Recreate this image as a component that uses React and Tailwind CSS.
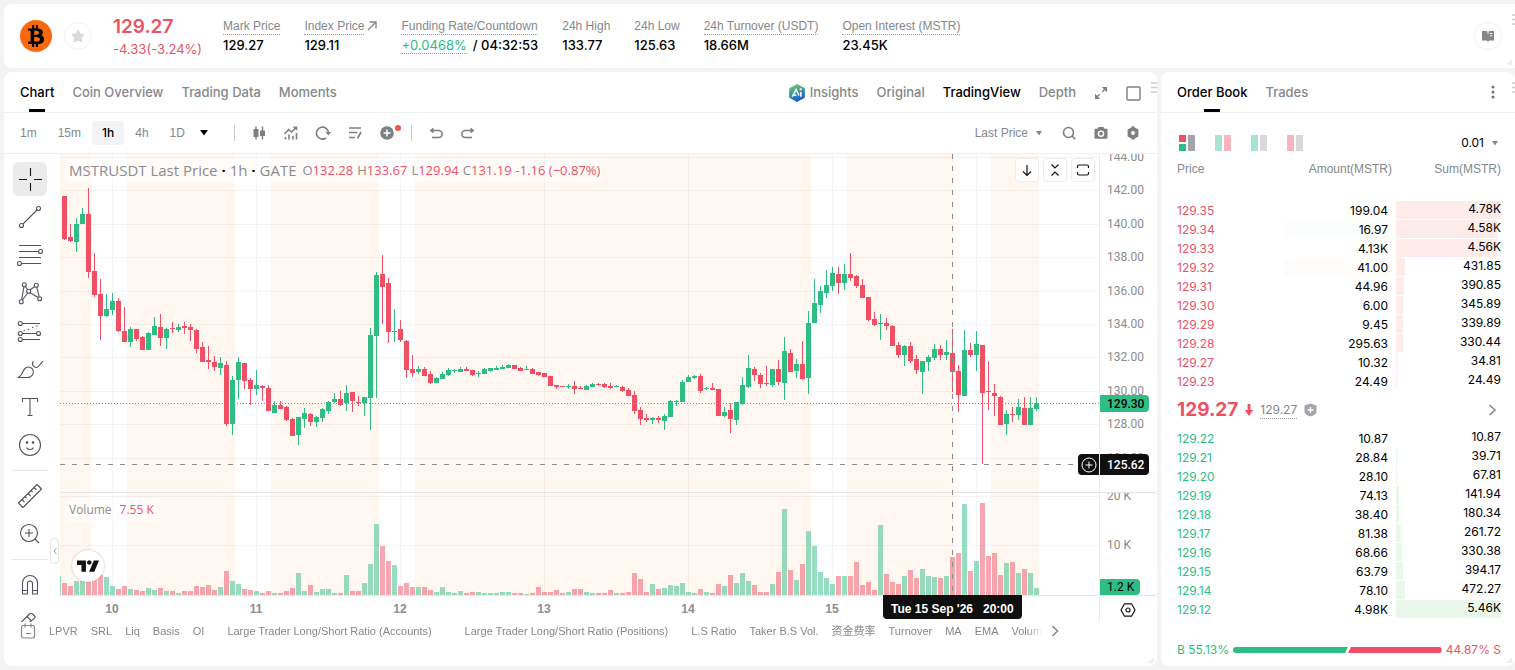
import React from "react";
import { FaBtc, FaStar } from "react-icons/fa";
import { SiTradingview } from "react-icons/si";

const UP = "#2ebd85";
const DOWN = "#f04f64";
const STEP = 6;

// Each candle: direction, body top, body bottom, high, low, volume height
const CANDLES = [
  ["d",196,239,196,240,12],["d",237,241,224,242,9],["u",224,242,218,252,14],["u",214,224,208,224,14],["d",214,272,188,278,18],
  ["d",271,295,253,297,18],["d",294,316,279,340,20],["u",309,316,294,317,18],["u",301,310,293,315,9],["d",301,331,298,332,6],
  ["d",331,342,307,342,9],["u",329,342,327,347,6],["d",329,339,329,341,5],["d",337,350,336,350,4],["u",333,350,332,350,7],
  ["u",326,335,317,335,5],["d",327,338,314,346,7],["u",329,338,328,349,4],["d",328,329,322,333,4],["u",327,330,324,332,2],
  ["d",326,328,322,334,4],["d",327,330,324,341,4],["d",330,349,329,353,9],["d",347,362,342,362,8],["d",360,362,346,369,10],
  ["d",362,367,356,371,5],["u",363,368,357,375,8],["d",365,424,361,426,24],["u",380,424,376,435,14],["u",362,380,357,399,11],
  ["d",363,381,363,389,6],["d",380,389,378,405,5],["u",385,389,370,395,4],["d",386,388,385,401,2],["d",388,411,385,411,4],
  ["u",405,413,401,413,2],["d",405,409,401,409,2],["d",407,420,406,421,4],["d",419,436,418,436,7],["u",417,435,417,445,22],
  ["u",413,419,408,428,4],["d",414,422,413,426,10],["u",417,422,416,427,3],["u",409,418,408,422,6],["u",402,411,401,414,6],
  ["u",399,402,393,403,2],["d",399,405,391,406,2],["u",393,403,385,411,20],["d",392,401,392,412,4],["d",402,403,396,406,4],
  ["u",397,403,397,416,12],["u",335,398,328,430,31],["u",275,336,272,398,71],["d",274,287,255,324,49],["d",283,332,278,343,34],
  ["u",331,332,309,342,30],["d",329,340,320,342,9],["d",341,370,340,378,12],["d",369,373,355,377,8],["u",369,372,366,374,8],
  ["d",369,376,367,376,8],["d",374,383,371,384,5],["u",378,383,377,383,3],["u",374,379,372,379,8],["u",370,375,368,376,3],
  ["u",370,371,369,373,2],["u",369,372,367,372,4],["d",369,371,367,371,2],["d",370,375,370,376,3],["u",373,374,371,377,3],
  ["u",369,374,368,374,2],["u",368,371,368,372,2],["u",368,370,366,370,2],["u",367,369,365,369,3],["u",365,368,364,368,3],
  ["d",365,369,365,369,2],["d",368,371,367,371,2],["u",369,370,366,370,1],["d",369,374,368,374,2],["d",372,375,372,376,8],
  ["d",373,377,373,377,3],["d",376,386,376,386,3],["d",385,387,385,389,5],["d",386,387,386,387,2],["u",386,387,384,389,3],
  ["d",386,389,381,394,6],["d",388,389,386,389,6],["u",386,390,385,390,3],["u",384,387,383,387,2],["d",384,385,383,386,2],
  ["d",384,387,383,388,2],["d",386,388,383,389,5],["u",386,387,385,387,2],["d",387,391,386,392,2],["d",390,396,388,396,3],
  ["d",395,411,391,414,22],["d",410,419,407,425,16],["d",418,420,414,422,3],["u",418,420,417,424,11],["d",418,420,416,423,6],
  ["u",416,421,414,430,7],["u",401,417,400,417,10],["u",401,402,400,406,9],["u",382,402,380,402,12],["u",377,382,375,382,3],
  ["u",376,378,375,379,2],["d",376,391,374,393,6],["u",388,389,387,390,3],["d",388,390,383,390,2],["d",389,416,389,416,11],
  ["u",412,416,407,417,9],["d",410,419,403,433,20],["u",402,420,402,425,12],["u",385,404,377,405,22],["u",368,387,355,388,14],
  ["d",369,375,367,381,10],["d",375,384,373,388,3],["d",383,384,366,386,3],["u",369,385,369,387,11],["d",369,382,360,385,23],
  ["u",351,383,337,400,86],["d",353,372,349,372,25],["u",364,371,359,378,15],["d",364,379,341,380,31],["u",323,378,311,394,64],
  ["u",303,323,279,323,49],["u",291,305,286,313,23],["u",285,293,270,298,17],["u",273,286,267,291,11],["d",274,283,267,294,19],
  ["u",274,283,264,290,19],["d",274,278,253,281,19],["d",276,286,275,288,33],["d",285,298,279,298,10],["d",297,320,297,321,13],
  ["d",319,325,312,326,5],["u",323,324,314,340,70],["d",323,326,318,330,21],["d",326,346,325,346,13],["d",345,355,342,358,11],
  ["u",346,355,345,366,19],["d",346,361,342,363,25],["d",359,370,355,374,17],["u",361,372,361,394,26],["u",357,362,355,371,19],
  ["u",349,358,344,360,18],["d",349,355,345,360,17],["u",352,355,340,360,19],["d",353,372,329,392,38],["d",371,395,365,412,42],
  ["u",350,396,330,396,91],["d",350,355,343,357,24],["u",344,355,331,371,34],["d",345,393,345,464,92],["d",391,392,361,410,39],
  ["d",393,396,384,416,42],["d",397,425,396,425,20],["u",414,424,410,435,32],["d",414,415,407,422,33],["u",407,415,399,420,22],
  ["d",408,425,397,425,26],["u",408,425,397,425,22],["u",403,409,397,411,7],
];

const SESSIONS = [[60,31],[127,108],[271,108],[415,396],[847,107],[991,48]];
const PRICE_LINES = [157,190,224,257,291,324,357,391,424,458];
const PRICES = ["144.00","142.00","140.00","138.00","136.00","134.00","132.00","130.00","128.00","126.00"];
const DAYS = ["10","11","12","13","14","15"];

const ASKS = [
  ["129.35","199.04","4.78K",105],["129.34","16.97","4.58K",101],["129.33","4.13K","4.56K",101],["129.32","41.00","431.85",9],
  ["129.31","44.96","390.85",8],["129.30","6.00","345.89",7],["129.29","9.45","339.89",7],["129.28","295.63","330.44",7],
  ["129.27","10.32","34.81",1],["129.23","24.49","24.49",1],
];
const BIDS = [
  ["129.22","10.87","10.87",0],["129.21","28.84","39.71",1],["129.20","28.10","67.81",1],["129.19","74.13","141.94",3],
  ["129.18","38.40","180.34",3],["129.17","81.38","261.72",5],["129.16","68.66","330.38",6],["129.15","63.79","394.17",7],
  ["129.14","78.10","472.27",9],["129.12","4.98K","5.46K",105],
];

function Stat({ label, value, dotted, arrow }) {
  return (
    <div className="flex flex-col items-start gap-[2px]">
      <div className="flex items-center gap-[3px] font-['Liberation_Sans',sans-serif] text-xs leading-4 text-[#84888c]">
        <span className={dotted ? "border-b border-dotted border-[#9a9da0]" : "border-b border-transparent"}>{label}</span>
        {arrow && (
          <svg width="10" height="10" viewBox="0 0 10 10" fill="none" stroke="currentColor" strokeWidth="1.3">
            <path d="M1 9 8.7 1.3M2.6 1h6.4v6.4" />
          </svg>
        )}
      </div>
      <div className="text-[13px] leading-4 font-medium text-black">{value}</div>
    </div>
  );
}

function Grip({ className, width }) {
  return (
    <svg className={className} width={width} height="12" aria-hidden="true">
      <path d={`M0 1h${width}M0 5.500h${width}M0 10h${width}`} stroke="#c9ccd0" strokeWidth="1.400" />
    </svg>
  );
}

function Corner() {
  return (
    <svg className="absolute right-[3px] bottom-[3px]" width="6" height="6" aria-hidden="true">
      <path d="M6 0v6H0z" fill="#eceef0" />
    </svg>
  );
}

function Header() {
  return (
    <header className="relative flex h-16 items-center overflow-hidden rounded-l-lg bg-white pl-4">
      <span className="flex size-8 items-center justify-center rounded-full bg-[#fa690f] text-black">
        <FaBtc size={22} />
      </span>
      <button aria-label="Favourite" className="ml-3 flex size-7 items-center justify-center rounded-full border border-[#f0f1f2] text-[#d9dadc]">
        <FaStar size={14} />
      </button>
      <div className="ml-[21px] flex flex-col pt-[2px] text-[#ec5266]">
        <span className="text-[19px] leading-6 font-semibold">129.27</span>
        <span className="text-[13px] leading-5">-4.33(-3.24%)</span>
      </div>
      <div className="ml-[21px] flex gap-6 pb-[2px]">
        <Stat label="Mark Price" value="129.27" dotted />
        <Stat label="Index Price" value="129.11" dotted arrow />
        <Stat
          label="Funding Rate/Countdown"
          dotted
          value={
            <>
              <span className="border-b border-dotted border-[#9a9da0] font-normal text-[#2ebd85]">+0.0468%</span>
              <span className="ml-[6px]">/ 04:32:53</span>
            </>
          }
        />
        <Stat label="24h High" value="133.77" />
        <Stat label="24h Low" value="125.63" />
        <Stat label="24h Turnover (USDT)" value="18.66M" dotted />
        <Stat label="Open Interest (MSTR)" value="23.45K" dotted />
      </div>
      <button aria-label="Guide" className="mr-[13px] ml-auto flex size-7 items-center justify-center rounded-full border border-[#f0f1f2]">
        <svg width="14" height="14" viewBox="0 0 14 14">
          <path d="M1 2h4.500L7 3l1.500-1H13v9.500H8.200L7 13l-1.200-1.500H1z" fill="#84868a" />
          <path d="M7 3v2M8.800 4.500h2.600M8.800 6.800h2.600" stroke="#fff" strokeWidth="0.900" />
        </svg>
      </button>
      <Grip className="absolute top-[10px] right-0" width={3} />
      <Corner />
    </header>
  );
}

function ChartTabs() {
  return (
    <div className="relative flex h-[41px] items-center border-b border-[#eff0f1] px-4 text-[13px] font-medium text-[#84888c]">
      <nav className="flex h-full gap-[18px] pt-[2px]">
        <button className="relative text-black">
          Chart
          <span className="absolute bottom-0 left-1/2 h-[3px] w-4 -translate-x-1/2 bg-black" />
        </button>
        <button>Coin Overview</button>
        <button>Trading Data</button>
        <button>Moments</button>
      </nav>
      <div className="ml-auto flex items-center gap-[18px] pt-[2px]">
        <button className="flex items-center gap-1">
          <svg width="18" height="20" viewBox="0 0 18 20">
            <defs>
              <linearGradient id="ai" x1="0" y1="0" x2="0.400" y2="1">
                <stop offset="0" stopColor="#7ed957" />
                <stop offset="0.500" stopColor="#3a9c9c" />
                <stop offset="1" stopColor="#1d5fd0" />
              </linearGradient>
            </defs>
            <path d="M9 1.500 16.300 5.500v9L9 18.500 1.700 14.500v-9z" fill="url(#ai)" stroke="url(#ai)" strokeLinejoin="round" />
            <path d="M4.200 13.700 8.200 6.500 11 12.500M6 12.300h2.400M12.800 9v4.700" fill="none" stroke="#fff" strokeWidth="1.600" />
            <path d="M12.800 4.800v2.800M11.400 6.200h2.800" stroke="#fff" strokeWidth="0.900" />
          </svg>
          Insights
        </button>
        <button>Original</button>
        <button className="text-black">TradingView</button>
        <button>Depth</button>
        <button aria-label="Expand">
          <svg width="14" height="14" viewBox="0 0 14 14" fill="none" stroke="#7d8083" strokeWidth="1.500">
            <path d="M8.300 5.700 12 2M5.700 8.300 2 12" />
            <path d="M7.800 1H13v5.200zM1 7.800V13h5.200z" fill="#7d8083" stroke="none" />
          </svg>
        </button>
        <button aria-label="Full screen">
          <svg width="15" height="15" viewBox="0 0 15 15" fill="none" stroke="#7d8083" strokeWidth="1.400">
            <rect x="1" y="1" width="13" height="13" rx="1" />
          </svg>
        </button>
      </div>
      <Grip className="absolute top-[10px] right-0" width={6} />
    </div>
  );
}

function ToolButton({ label, children }) {
  return (
    <button aria-label={label} className="relative flex h-6 w-8 items-center justify-center text-[#7d8083]">
      {children}
    </button>
  );
}

function Icon16({ children }) {
  return (
    <svg width="16" height="16" viewBox="0 0 16 16" fill="none" stroke="currentColor" strokeWidth="1.600">
      {children}
    </svg>
  );
}

function ChartToolbar() {
  return (
    <div className="flex h-[41px] items-center border-b border-[#eff0f1] pr-2 pl-[6px] font-['Liberation_Sans',sans-serif] text-xs text-[#84888c]">
      <div className="flex items-center gap-px">
        <button className="h-6 px-[10px]">1m</button>
        <button className="h-6 px-[10px]">15m</button>
        <button className="h-6 rounded bg-[#f2f3f4] px-[10px] font-['Inter',sans-serif] font-medium text-black">1h</button>
        <button className="h-6 px-[10px]">4h</button>
        <button className="h-6 px-[10px]">1D</button>
        <button aria-label="More intervals" className="flex h-6 w-4 items-center justify-center">
          <svg width="8" height="6"><path d="M0 0h8L4 5.500z" fill="#000" /></svg>
        </button>
      </div>
      <span className="mr-2 ml-[22px] h-4 w-px bg-[#c9cbcd]" />
      <ToolButton label="Candle style">
        <Icon16>
          <path d="M5 1.500v13M11.500 1.500v13" strokeWidth="1.400" />
          <path d="M2.500 4h5v8h-5zM9 5.500h5V11H9z" fill="currentColor" stroke="none" />
        </Icon16>
      </ToolButton>
      <ToolButton label="Indicators">
        <Icon16>
          <path d="M1.500 9 5.500 4.500 8.500 7 13.500 2M10.500 2.200h3V5M2.500 12v2.500M6 9.500v5M10 11v3.500M13.500 8v6.500" />
        </Icon16>
      </ToolButton>
      <ToolButton label="Reload">
        <Icon16>
          <path d="M11 13A6 6 0 1 1 13.500 8" />
          <path d="M10.500 7H16l-2.700 3.500z" fill="currentColor" stroke="none" />
        </Icon16>
      </ToolButton>
      <ToolButton label="Templates">
        <Icon16><path d="M2 3h12M2 7.500h8.500M2 12.500h6M14 7l-3.500 6.500" /></Icon16>
      </ToolButton>
      <ToolButton label="Add to chart">
        <svg width="14" height="14" viewBox="0 0 14 14">
          <circle cx="7" cy="7" r="6.800" fill="currentColor" />
          <path d="M7 3.500v7M3.500 7h7" stroke="#fff" strokeWidth="1.500" />
        </svg>
        <span className="absolute top-1 right-[2px] size-[6px] rounded-full bg-[#f2564b]" />
      </ToolButton>
      <span className="mx-2 h-4 w-px bg-[#c9cbcd]" />
      <ToolButton label="Undo">
        <Icon16><path d="M3.500 5.500h7.200a3.500 3.500 0 0 1 0 7H4" /><path d="M5.500 2.500v6L1.500 5.500z" fill="currentColor" stroke="none" /></Icon16>
      </ToolButton>
      <ToolButton label="Redo">
        <Icon16><path d="M12.500 5.500H5.300a3.500 3.500 0 0 0 0 7H12" /><path d="M10.500 2.500v6l4-3z" fill="currentColor" stroke="none" /></Icon16>
      </ToolButton>
      <button className="ml-auto flex items-center gap-2">
        Last Price
        <svg width="6" height="5"><path d="M0 0h6L3 4.500z" fill="#84888c" /></svg>
      </button>
      <span className="w-[11px]" />
      <ToolButton label="Search">
        <Icon16><circle cx="7.500" cy="7.500" r="5" /><path d="m11 11 3.300 3.300" /></Icon16>
      </ToolButton>
      <ToolButton label="Screenshot">
        <svg width="14" height="14" viewBox="0 0 14 14">
          <path d="M4.500 1h5l1 1.800H13c.3 0 .5.200.5.500V12c0 .5-.3.800-.8.800H1.300c-.5 0-.8-.3-.8-.8V3.300c0-.3.200-.5.500-.5h2.500z" fill="currentColor" />
          <circle cx="7" cy="7.700" r="2.600" fill="none" stroke="#fff" strokeWidth="1.400" />
        </svg>
      </ToolButton>
      <ToolButton label="Settings">
        <svg width="14" height="14" viewBox="0 0 14 14">
          <path d="M7 1.500 11.500 4v6L7 12.500 2.500 10V4z" fill="currentColor" stroke="currentColor" strokeWidth="1.800" strokeLinejoin="round" />
          <path d="M7 .300v13.400" stroke="currentColor" strokeWidth="2.500" />
          <circle cx="7" cy="7" r="1.900" fill="#fff" />
        </svg>
      </ToolButton>
    </div>
  );
}

function DrawIcon({ children }) {
  return (
    <svg width="28" height="28" viewBox="-14 -14 28 28" fill="none" stroke="#50535e" strokeWidth="1.100">
      {children}
    </svg>
  );
}

const DRAW_TOOLS = [
  ["Trend line", <><path d="M-7 7 7-7" /><circle cx="-8.500" cy="8.500" r="2" /><circle cx="8.500" cy="-8.500" r="2" /></>],
  ["Fibonacci", <><path d="M-11-9.500h22M-11-3.500H8.500M-11 2.500h22M-8.500 8.500H11" /><circle cx="10.500" cy="-3.500" r="2" /><circle cx="-10.500" cy="8.500" r="2" /></>],
  ["Patterns", <><path d="M-8.400 6.700-6-6.300M-4.600-6.700-2.400-3.300M0-3 4.800-6.500M6.800-5.700 9.200 3.700M-7.700 7-2.300 0M0-.3 8.300 4.500" /><circle cx="-8.700" cy="8.700" r="2" /><circle cx="-5.700" cy="-8.300" r="2" /><circle cx="-1.300" cy="-1.700" r="2" /><circle cx="6.300" cy="-7.700" r="2" /><circle cx="9.700" cy="5.700" r="2" /></>],
  ["Forecast", <><path d="M-7.700-7.500H10M-7.700 2.500H6.500M-7.700 8.500H10" /><path d="M-6.500 0 9.500-6" strokeDasharray="1.500 3" /><circle cx="-9.700" cy="-7.500" r="2" /><circle cx="-9.700" cy="2.500" r="2" /><circle cx="8.500" cy="2.500" r="2" /><circle cx="-9.700" cy="8.500" r="2" /></>],
  ["Brush", <><path d="M-11.500 8.500H-3C2 8.500 4.200 4.500 3 1 1.800-2-2-2.800-4.500-1-8 1.500-6 5-11.500 8.500z" /><path d="M3.500-7.500C1-5 3.500-1.500 6.500-1.500 8-1.500 8.500-2.500 13-8" /></>],
  ["Text", <><path d="M-7.500-5v-3.500h15V-5M0-8.500v17M-2.500 8.500h5" /></>],
  ["Emoji", <><circle cx="0" cy="0" r="10.500" /><path d="M-3.500 2.500c1 2.700 6 2.700 7 0" /><circle cx="-3" cy="-2.500" r=".8" fill="#50535e" /><circle cx="3" cy="-2.500" r=".8" fill="#50535e" /></>],
];

function DrawingBar() {
  return (
    <div className="relative flex w-14 shrink-0 flex-col items-center overflow-hidden pt-2 pr-1">
      <div className="flex flex-col gap-1">
        <button aria-label="Cross" className="flex size-[34px] items-center justify-center rounded-md bg-[#ebebeb]">
          <svg width="28" height="28" viewBox="0 0 28 28" stroke="#131313" strokeWidth="1.100">
            <path d="M14.500 3v8M14.500 18v8M3 14.500h8M18 14.500h8" />
          </svg>
        </button>
        {DRAW_TOOLS.map(([label, icon]) => (
          <button key={label} aria-label={label} className="flex size-[34px] items-center justify-center">
            <DrawIcon>{icon}</DrawIcon>
          </button>
        ))}
      </div>
      <span className="my-2 h-px w-9 shrink-0 bg-[#e4e5e7]" />
      <div className="flex flex-col gap-1">
        <button aria-label="Measure" className="flex size-[34px] items-center justify-center">
          <DrawIcon>
            <path d="M-11.500 7 7-11.500 11.500-7-7 11.500z" strokeLinejoin="round" />
            <path d="m-8 3.500 2.500 2.500M-5 .5l1.500 1.500M-2-2.500.5 0M1-5.500l1.500 1.500M4-8.500 6.500-6" />
          </DrawIcon>
        </button>
        <button aria-label="Zoom in" className="flex size-[34px] items-center justify-center">
          <DrawIcon><circle cx="-1" cy="-1" r="8.500" /><path d="M-5-1h8M-1-5v8M5 5l4 4" /></DrawIcon>
        </button>
      </div>
      <span className="my-2 h-px w-9 shrink-0 bg-[#e4e5e7]" />
      <div className="flex flex-col gap-[6px]">
        <button aria-label="Magnet" className="flex size-[34px] items-center justify-center">
          <DrawIcon>
            <path d="M-7.500 9V-2a7.500 7.500 0 0 1 15 0V9h-5V-1.500a2.500 2.500 0 0 0-5 0V9zM-7.500 5.500h5M2.500 5.500h5" />
          </DrawIcon>
        </button>
        <button aria-label="Edit" className="flex size-[34px] items-center justify-center">
          <DrawIcon><path d="M-9-2.500-.500-11c1-1 2-1 3 0l2 2c.700.700.700 1.500 0 2.200L-1-2.300M-3-8.500l4.500 4.500M2-2.500h6" /></DrawIcon>
        </button>
      </div>
      <button aria-label="Hide drawing bar" className="absolute top-[384px] right-[1px] flex h-[26px] w-[9px] items-center justify-center rounded border border-[#e4e5e7] bg-white">
        <svg width="4" height="8" fill="none" stroke="#9a9da0"><path d="M3.500 1 1 4l2.500 3" /></svg>
      </button>
    </div>
  );
}

function Plot() {
  return (
    <svg className="block h-[442px] w-full" role="img" aria-label="MSTRUSDT hourly candles and volume">
      <g transform="translate(-60 -154)" shapeRendering="crispEdges">
        {SESSIONS.map(([x, w]) => (
          <rect key={x} x={x} y="154" width={w} height="441" fill="#fff7f0" />
        ))}
        {[...PRICE_LINES, 496, 545].map((y) => (
          <rect key={y} x="60" y={y} width="100%" height="1" fill="#000" fillOpacity="0.045" />
        ))}
        {[112, 256, 400, 544, 688, 832, 976].map((x) => (
          <rect key={x} x={x} y="154" width="1" height="441" fill="#000" fillOpacity="0.045" />
        ))}
        <rect x="60" y="492" width="100%" height="1" fill="#e3e4e6" />
        <rect x="60" y="595" width="100%" height="1" fill="#e8e9eb" />
        <rect x="60" y="576" width="1" height="19" fill={UP} fillOpacity="0.5" />
        {CANDLES.map(([dir, , , , , vol], i) => (
          <rect key={i} x={62 + i * STEP} y={595 - vol} width="5" height={vol} fill={dir === "u" ? UP : DOWN} fillOpacity="0.5" />
        ))}
        {CANDLES.map(([dir, top, bottom, high, low], i) => (
          <g key={i} fill={dir === "u" ? UP : DOWN}>
            <rect x={64 + i * STEP} y={high} width="1" height={low - high} />
            <rect x={62 + i * STEP} y={top} width="5" height={bottom - top} />
          </g>
        ))}
        <line x1="60" x2="1400" y1="403.500" y2="403.500" stroke={UP} strokeDasharray="1 2" />
        <line x1="60" x2="1400" y1="464.500" y2="464.500" stroke="#8d8d8d" strokeDasharray="5 7" />
        <line x1="952.500" x2="952.500" y1="154" y2="595" stroke="#8d8d8d" strokeDasharray="5 7" />
      </g>
    </svg>
  );
}

function OverlayButton({ label, children }) {
  return (
    <button aria-label={label} className="flex size-6 items-center justify-center rounded border border-[#ebecee] bg-white">
      <svg width="16" height="16" viewBox="0 0 16 16" fill="none" stroke="#131313" strokeWidth="1.200">{children}</svg>
    </button>
  );
}

function Ohlc({ name, value }) {
  return (
    <span>
      {name}
      <span className="text-[#ec5266]">{value}</span>
    </span>
  );
}

function PriceChart() {
  return (
    <div className="flex h-[468px]">
      <DrawingBar />
      <div className="relative min-w-0 flex-1 overflow-hidden font-['Open_Sans',sans-serif] text-[#8c8c8c]">
        <Plot />
        <div className="absolute top-1 left-[5px] flex items-center gap-[6px] rounded bg-white/50 px-1 leading-6">
          <span className="text-[15px]">MSTRUSDT Last Price <b className="text-black">·</b> 1h <b className="text-black">·</b> GATE</span>
          <span className="flex gap-1 text-[13px] leading-6">
            <Ohlc name="O" value="132.28" />
            <Ohlc name="H" value="133.67" />
            <Ohlc name="L" value="129.94" />
            <Ohlc name="C" value="131.19" />
            <span className="text-[#ec5266]">-1.16 (−0.87%)</span>
          </span>
        </div>
        <div className="absolute top-1 right-1 flex gap-1">
          <OverlayButton label="Move down"><path d="M8 3v10M4 9.500l4 4 4-4" /></OverlayButton>
          <OverlayButton label="Collapse"><path d="m4.500 2.500 3.500 3.500 3.500-3.500M4.500 13.500 8 10l3.500 3.500" /></OverlayButton>
          <OverlayButton label="Maximise"><path d="M2.500 6V4.500c0-1 .5-1.500 1.500-1.500h8c1 0 1.500.5 1.500 1.500V6M2.500 10v1.500c0 1 .5 1.500 1.500 1.500h8c1 0 1.500-.5 1.500-1.500V10" /></OverlayButton>
        </div>
        <div className="absolute top-[344px] left-[5px] flex gap-2 rounded bg-white/50 px-1 text-xs leading-6">
          Volume <span className="text-[#ec5266]">7.55 K</span>
        </div>
        <a href="#tradingview" aria-label="TradingView" className="absolute top-[396px] left-3 flex size-8 items-center justify-center rounded-full bg-white text-[#131313] shadow-[0_0_2px_rgba(0,0,0,0.300)]">
          <SiTradingview size={22} />
        </a>
        <div className="absolute top-[447px] left-[-20px] flex font-['Liberation_Sans',sans-serif] text-xs leading-4 font-bold">
          {DAYS.map((d) => (
            <span key={d} className="w-36 text-center">{d}</span>
          ))}
        </div>
        <div className="absolute top-[441px] left-[823px] flex h-6 items-center gap-[10px] rounded-b-sm bg-[#0f0f0f] px-2 pt-1 font-['Liberation_Sans',sans-serif] text-xs font-bold text-white">
          <span>Tue 15 Sep '26</span>
          <span>20:00</span>
        </div>
        <span className="absolute top-[300px] right-0 flex h-[21px] w-[21px] items-center justify-center rounded-l-sm bg-[#0f0f0f]">
          <svg width="16" height="16" fill="none" stroke="#fff"><circle cx="8" cy="8" r="7" /><path d="M8 4.500v7M4.500 8h7" /></svg>
        </span>
      </div>
      <div className="relative w-[58px] shrink-0 overflow-hidden border-l border-[#ebecee] font-['Roboto',sans-serif] text-xs text-[#8c8c8c]">
        <div className="relative h-[338px] overflow-hidden">
          {PRICES.map((p, i) => (
            <span key={p} className="absolute left-[7px] leading-4" style={{ top: PRICE_LINES[i] - 162 }}>{p}</span>
          ))}
          <span className="absolute top-[241px] left-0 flex h-[17px] w-[49px] items-center rounded-r-sm bg-[#2ebd85] pl-[7px] font-medium text-black">129.30</span>
          <span className="absolute top-[300px] left-0 flex h-[21px] w-[49px] items-center rounded-r-sm bg-[#0f0f0f] pl-[7px] font-medium text-white">125.62</span>
        </div>
        <div className="relative h-[104px] overflow-hidden border-t border-b border-[#e3e4e6]">
          <span className="absolute top-[-5px] left-[7px] leading-4">20 K</span>
          <span className="absolute top-[44px] left-[7px] leading-4">10 K</span>
          <span className="absolute bottom-0 left-0 flex h-4 w-10 items-center rounded-r-sm bg-[#2ebd85] pl-[7px] text-black">1.2 K</span>
        </div>
        <button aria-label="Axis settings" className="mt-[6px] ml-5 block">
          <svg width="16" height="16" viewBox="0 0 16 16" fill="none" stroke="#131313" strokeWidth="1.200">
            <path d="M4.500 1.800h7L15 8l-3.500 6.200h-7L1 8z" strokeLinejoin="round" /><circle cx="8" cy="8" r="2" />
          </svg>
        </button>
      </div>
    </div>
  );
}

const INDICATORS = ["LPVR","SRL","Liq","Basis","OI","Large Trader Long/Short Ratio (Accounts)","Large Trader Long/Short Ratio (Positions)","L.S Ratio","Taker B.S Vol.","资金费率","Turnover","MA","EMA","Volume"];

function IndicatorBar() {
  return (
    <div className="flex h-[18px] items-center pr-[98px] pl-4 font-['Liberation_Sans','Noto_Sans_CJK_SC',sans-serif] text-[11px] leading-4 text-[#84888c]">
      <button aria-label="Calendar" className="shrink-0">
        <svg width="16" height="16" viewBox="0 0 16 16" fill="none" stroke="#84888c" strokeWidth="1.200">
          <rect x="1.500" y="2.500" width="13" height="12.500" rx="2" /><path d="M5 .5v4M11 .5v4M6 10.500h5" />
        </svg>
      </button>
      <div className="ml-[13px] flex min-w-0 flex-1 gap-[13px] overflow-hidden whitespace-nowrap [mask-image:linear-gradient(to_right,#000_calc(100%-16px),transparent)]">
        {INDICATORS.map((name) => (
          <button key={name} className={name.startsWith("Large") ? "px-[10px]" : ""}>{name}</button>
        ))}
      </div>
      <button aria-label="More indicators" className="ml-2 shrink-0">
        <svg width="8" height="12" fill="none" stroke="#84888c" strokeWidth="1.500"><path d="m1.500 1 5 5-5 5" /></svg>
      </button>
    </div>
  );
}

function Rows({ rows, color, bar, flash }) {
  return (
    <tbody>
      {rows.map(([price, amount, sum, depth], i) => (
        <tr key={price} className="h-[19px]">
          <td className={color}>{price}</td>
          <td className="pr-2 text-right">
            <div className={`ml-auto h-4 w-[104px] leading-4 ${(flash && flash[i]) || ""}`}>{amount}</div>
          </td>
          <td className="w-[105px] text-right">
            <div className="relative mb-px h-[18px] leading-4">
              <div className={`absolute inset-y-0 left-0 ${bar}`} style={{ width: depth }} />
              <span className="relative">{sum}</span>
            </div>
          </td>
        </tr>
      ))}
    </tbody>
  );
}

function LayoutButton({ label, left, right, split }) {
  return (
    <button aria-label={label} className="flex h-4 w-4 gap-[2px]">
      {split ? (
        <span className="flex w-[7px] flex-col gap-[2px]">
          <span className="h-[7px] bg-[#f04f64]" />
          <span className="h-[7px] bg-[#2ebd85]" />
        </span>
      ) : (
        <span className={`h-4 w-[7px] ${left}`} />
      )}
      <span className={`h-4 w-[7px] ${right}`} />
    </button>
  );
}

function OrderBook() {
  return (
    <section className="relative flex w-[354px] shrink-0 flex-col overflow-hidden rounded-lg bg-white">
      <div className="relative flex h-[41px] shrink-0 items-center border-b border-[#eff0f1] pr-5 pl-4 text-[13px] font-medium text-[#84888c]">
        <nav className="flex h-full gap-[18px] pt-[2px]">
          <button className="relative text-black">
            Order Book
            <span className="absolute bottom-0 left-1/2 h-[3px] w-4 -translate-x-1/2 bg-black" />
          </button>
          <button>Trades</button>
        </nav>
        <button aria-label="More" className="ml-auto">
          <svg width="4" height="14" fill="#6f7275"><circle cx="2" cy="2" r="1.500" /><circle cx="2" cy="7" r="1.500" /><circle cx="2" cy="12" r="1.500" /></svg>
        </button>
        <Grip className="absolute top-[10px] right-0" width={3} />
      </div>
      <div className="flex grow flex-col pr-[14px] pl-4">
        <div className="mt-[22px] flex h-4 items-center gap-5 pl-[2px]">
          <LayoutButton label="Both sides" split right="bg-[#a3a5a8]" />
          <LayoutButton label="Side by side" left="bg-[#a9e4cd]" right="bg-[#fab4bd]" />
          <LayoutButton label="Bids only" left="bg-[#a9e4cd]" right="bg-[#d8d9da]" />
          <LayoutButton label="Asks only" left="bg-[#fab4bd]" right="bg-[#d8d9da]" />
          <button className="mr-[3px] ml-auto flex items-center gap-2 text-xs">
            0.01
            <svg width="6" height="5"><path d="M0 0h6L3 4.500z" fill="#84888c" /></svg>
          </button>
        </div>
        <table className="w-full text-xs">
          <thead>
            <tr className="h-[50px] align-top font-['Liberation_Sans',sans-serif] leading-4 text-[#84888c]">
              <th className="pt-[10px] text-left font-normal">Price</th>
              <th className="pt-[10px] pr-1 text-right font-normal">Amount(MSTR)</th>
              <th className="pt-[10px] text-right font-normal">Sum(MSTR)</th>
            </tr>
          </thead>
          <Rows rows={ASKS} color="text-[#ec5266]" bar="bg-[#feeceb]" flash={{ 1: "bg-[#fbfefc]", 3: "bg-[#fefbfb]" }} />
        </table>
        <div className="flex h-[38px] items-center">
          <span className="text-[19px] leading-6 font-bold text-[#ec5266]">129.27</span>
          <svg className="ml-[6px]" width="10" height="14" viewBox="0 0 10 14">
            <path d="M3.600 1h2.800v6H9.200L5 13 .8 7h2.800z" fill="#f04f64" />
          </svg>
          <span className="ml-[6px] border-b border-dotted border-[#9a9da0] text-xs leading-4 text-[#84888c]">129.27</span>
          <svg className="ml-[7px]" width="13" height="14" viewBox="0 0 13 14">
            <path d="M6.500.5 12.500 2.500v6c0 2.500-3 4-6 5-3-1-6-2.500-6-5v-6z" fill="#a3a5a8" />
            <path d="M6.500 4v6M3.500 7h6" stroke="#fff" strokeWidth="1.400" />
          </svg>
          <button aria-label="Recent trades" className="mr-1 ml-auto">
            <svg width="9" height="12" fill="none" stroke="#84888c" strokeWidth="1.600"><path d="m1.500 1 5.500 5-5.500 5" /></svg>
          </button>
        </div>
        <table className="w-full text-xs">
          <Rows rows={BIDS} color="text-[#2ebd85]" bar="bg-[#e9f8ea]" />
        </table>
        <div className="mt-[23px] flex items-center gap-1 text-xs leading-4">
          <span className="text-[#2ebd85]">B 55.13%</span>
          <div className="flex h-[6px] flex-1">
            <div className="rounded-l-full bg-[#2ebd85] [clip-path:polygon(0_0,100%_0,calc(100%-3px)_100%,0_100%)]" style={{ width: "55.13%" }} />
            <div className="flex-1 rounded-r-full bg-[#f04f64] [clip-path:polygon(3px_0,100%_0,100%_100%,0_100%)]" />
          </div>
          <span className="text-[#ec5266]">44.87% S</span>
        </div>
      </div>
      <Corner />
    </section>
  );
}

export default function App() {
  return (
    <div className="flex min-h-screen flex-col gap-1 bg-[#f2f3f4] py-1 pl-1 font-['Inter','Noto_Sans_CJK_SC',sans-serif]">
      <Header />
      <main className="flex grow gap-1">
        <section className="relative min-w-0 flex-1 rounded-lg bg-white">
          <ChartTabs />
          <ChartToolbar />
          <PriceChart />
          <IndicatorBar />
          <Corner />
        </section>
        <OrderBook />
      </main>
    </div>
  );
}
